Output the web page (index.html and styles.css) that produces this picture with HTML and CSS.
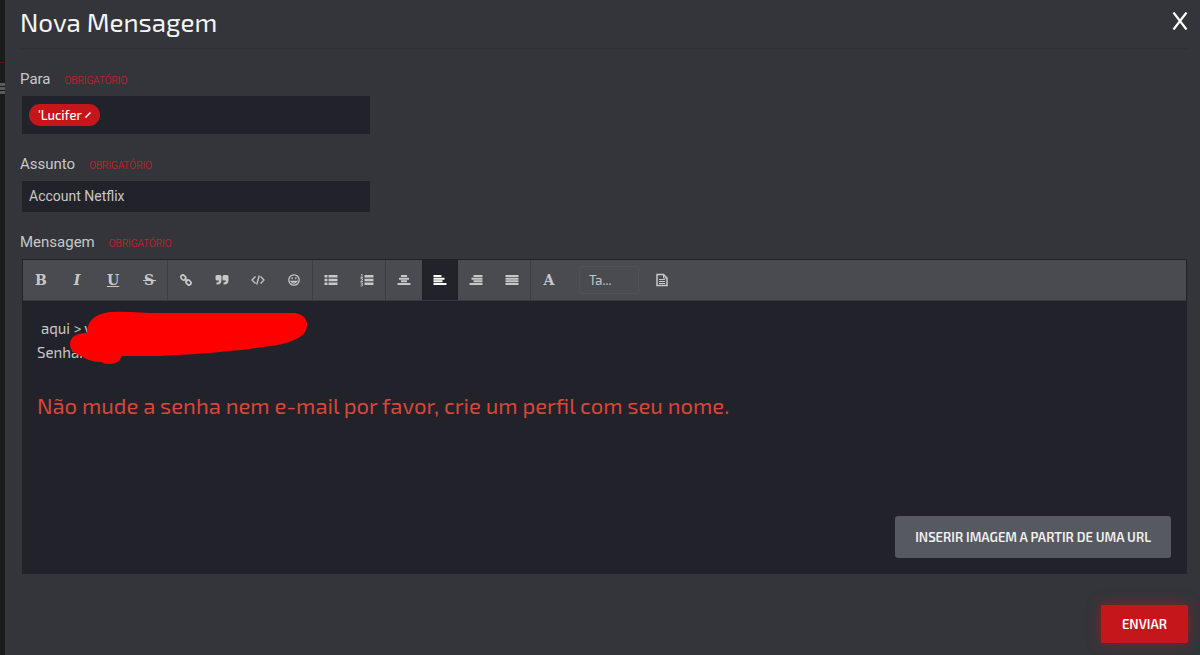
FILE: index.html
```
<!DOCTYPE html>
<html lang="pt-BR">
<head>
    <meta charset="UTF-8">
    <title>Nova Mensagem</title>
    <link rel="stylesheet" href="styles.css">
</head>
<body>
    <!-- strip of the page behind the modal -->
    <div class="behind">
        <div class="behind-line"></div>
        <div class="behind-menu"></div>
    </div>

    <form class="modal">
        <header class="modal-header">
            <h1>Nova Mensagem</h1>
            <button type="button" class="close" aria-label="Fechar">
                <svg width="16" height="18" viewBox="0 0 16 18"><path d="M1.500 0.500L14.500 17.500M14.500 0.500L1.500 17.500" stroke="#fff" stroke-width="2.200"/></svg>
            </button>
        </header>

        <div class="label-row">
            <label for="to">Para</label>
            <span class="required">OBRIGATÓRIO</span>
        </div>
        <div class="field tags">
            <span class="tag">'Lucifer
                <svg width="6" height="6" viewBox="0 0 6 6"><path d="M0.500 5.500L5.500 0.500" stroke="#fff" stroke-width="1.500"/></svg>
            </span>
            <input type="text" id="to">
        </div>

        <div class="label-row">
            <label for="subject">Assunto</label>
            <span class="required">OBRIGATÓRIO</span>
        </div>
        <input type="text" id="subject" class="field subject" value="Account Netflix">

        <div class="label-row">
            <label id="message-label">Mensagem</label>
            <span class="required">OBRIGATÓRIO</span>
        </div>
        <div class="editor">
            <div class="toolbar">
                <div class="group">
                    <button type="button" class="letter" aria-label="Negrito">B</button>
                    <button type="button" class="letter italic" aria-label="Itálico">I</button>
                    <button type="button" class="letter underline" aria-label="Sublinhado">U</button>
                    <button type="button" class="letter strike" aria-label="Tachado">S</button>
                </div>
                <div class="group">
                    <button type="button" aria-label="Link">
                        <svg viewBox="0 0 14 14" fill="none" stroke="currentColor" stroke-width="1.700"><rect x="1.600" y="2.600" width="5.400" height="4" rx="2" transform="rotate(45 4.300 4.600)"/><rect x="6.800" y="7.400" width="5.400" height="4" rx="2" transform="rotate(45 9.500 9.400)"/><path d="M5.500 5.500l3 3"/></svg>
                    </button>
                    <button type="button" aria-label="Citação">
                        <svg viewBox="0 0 14 14" fill="currentColor"><path d="M2 2h3q1.500 0 1.500 1.500V7q0 4.500-4.500 4.500H1.500v-2H2Q4 9.500 4 7.500H2Q.5 7.500 .5 6V3.500Q.5 2 2 2zM9 2h3q1.500 0 1.500 1.500V7q0 4.500-4.500 4.500H8.500v-2H9q2 0 2-2H9Q7.500 7.500 7.500 6V3.500Q7.500 2 9 2z"/></svg>
                    </button>
                    <button type="button" aria-label="Código">
                        <svg viewBox="0 0 14 14" fill="none" stroke="currentColor" stroke-width="1.300"><path d="M4.500 3.500L1 7l3.500 3.500M9.500 3.500L13 7l-3.500 3.500M8.300 2.500L5.700 11.500"/></svg>
                    </button>
                    <button type="button" aria-label="Emoticon">
                        <svg viewBox="0 0 14 14" fill="none" stroke="currentColor" stroke-width="1.300"><circle cx="7" cy="7" r="5.200"/><path d="M4.200 8.300q2.800 3.600 5.600 0zM5.200 4.300v2M8.800 4.300v2"/></svg>
                    </button>
                </div>
                <div class="group">
                    <button type="button" aria-label="Lista">
                        <svg viewBox="0 0 14 14" fill="currentColor"><path d="M.5 2h3v2.500h-3zM.5 5.800h3v2.500h-3zM.5 9.500h3V12h-3zM4.500 2h9v2.500h-9zM4.500 5.800h9v2.500h-9zM4.500 9.500h9V12h-9z"/></svg>
                    </button>
                    <button type="button" aria-label="Lista numerada">
                        <svg viewBox="0 0 14 14" fill="currentColor"><path d="M4.500 2h9v2.500h-9zM4.500 5.800h9v2.500h-9zM4.500 9.500h9V12h-9z"/><path d="M1 1.500h1v3M.5 4.500h2.500M.5 5.800h2v1.200l-1.800 1.500h2.300M.5 10h2.300l-1.200 1.300q1.500 0 1 1.200-.8 1-2.100.2" fill="none" stroke="currentColor" stroke-width=".9"/></svg>
                    </button>
                </div>
                <div class="group">
                    <button type="button" aria-label="Centralizar">
                        <svg viewBox="0 0 14 14" fill="currentColor"><path d="M4 2h6v2H4zM2 4.700h10v2H2zM4 7.300h6v2H4zM.5 10h13v2H.5z"/></svg>
                    </button>
                    <button type="button" class="active" aria-label="Alinhar à esquerda">
                        <svg viewBox="0 0 14 14" fill="currentColor"><path d="M.5 2h8v2h-8zM.5 4.700h11v2H.5zM.5 7.300h9v2h-9zM.5 10h13v2H.5z"/></svg>
                    </button>
                    <button type="button" aria-label="Alinhar à direita">
                        <svg viewBox="0 0 14 14" fill="currentColor"><path d="M4.500 2h9v2h-9zM2.500 4.700h11v2h-11zM4.500 7.300h9v2h-9zM.5 10h13v2H.5z"/></svg>
                    </button>
                    <button type="button" aria-label="Justificar">
                        <svg viewBox="0 0 14 14" fill="currentColor"><path d="M.5 2h13v2H.5zM.5 4.700h13v2H.5zM.5 7.300h13v2H.5zM.5 10h13v2H.5z"/></svg>
                    </button>
                </div>
                <div class="group last">
                    <button type="button" class="letter" aria-label="Cor do texto">A</button>
                    <select class="size" aria-label="Tamanho">
                        <option>Ta...</option>
                    </select>
                    <button type="button" aria-label="Modelos">
                        <svg viewBox="0 0 14 14" fill="none" stroke="currentColor"><path d="M2 1.500H8.500L12 5V12.500H2z" stroke-width="1.500"/><path d="M8.500 1.500V5H12M4 6.500h6M4 8.500h6M4 10.500h6" stroke-width="1"/></svg>
                    </button>
                </div>
            </div>

            <div class="message" contenteditable="true" spellcheck="false" role="textbox" aria-labelledby="message-label">
                <p class="first">aqui &gt; v</p>
                <p>Senha:</p>
                <p class="warning">Não mude a senha nem e-mail por favor, crie um perfil com seu nome.</p>
            </div>
            <svg class="scribble" width="238" height="54" viewBox="0 0 238 54"><path d="M40 1Q50 0 80 2H225Q237 4 237 14Q237 24 224 29Q212 34 201 35L172 39L159 40Q130 43 105 44L89 45H52Q49 53 39 53Q34 53 31 51Q20 51 11 45Q0 41 0 34Q0 22 17 22Q17 4 40 1Z" fill="#f00"/></svg>

            <div class="editor-footer">
                <button type="button" class="insert">INSERIR IMAGEM A PARTIR DE UMA URL</button>
            </div>
        </div>

        <div class="actions">
            <button type="submit" class="send">ENVIAR</button>
        </div>
    </form>
</body>
</html>
```
FILE: styles.css
```
* {
    box-sizing: border-box;
}
body {
    margin: 0;
    min-height: 100vh;
    display: flex;
    background-color: #33353b;
    color: #c8c8c9;
    font-family: "Exo 2", "Open Sans", sans-serif;
}
h1, p {
    margin: 0;
    font-weight: normal;
}
button, input, select {
    margin: 0;
    padding: 0;
    border: 0;
    background: none;
    color: inherit;
    font-family: inherit;
}

/* page behind */
.behind {
    width: 5px;
    flex-shrink: 0;
    padding-top: 62px;
    background-color: #1b1b1c;
}
.behind-line {
    height: 1px;
    background-color: #5c1014;
}
.behind-menu {
    height: 11px;
    margin-top: 20px;
    background: repeating-linear-gradient(#5a5a5b 0 3px, #1b1b1c 3px 4px);
}

.modal {
    flex: 1;
    min-width: 0;
    padding: 0 12px 12px 15px;
}
.modal-header {
    display: flex;
    justify-content: space-between;
    align-items: center;
    height: 49px;
    padding-bottom: 6px;
    border-bottom: 1px solid #2e3035;
}
.modal-header h1 {
    color: #f4f4f4;
    font-size: 26px;
}
.close {
    display: flex;
}

/* labels and fields */
.label-row {
    display: flex;
    align-items: center;
    gap: 14px;
    height: 20px;
    margin: 20px 0 7px;
    font-family: Roboto, sans-serif;
    font-size: 15px;
}
.required {
    padding-top: 2px;
    color: #e01c22;
    font-size: 10px;
    font-weight: 300;
}
.field {
    display: flex;
    width: 348px;
    max-width: 100%;
    margin-left: 2px;
    background-color: #22222b;
}
.tags {
    align-items: center;
    height: 38px;
    padding: 0 7px;
}
.tags input {
    flex: 1;
    min-width: 0;
}
.tag {
    display: flex;
    align-items: center;
    gap: 3px;
    height: 22px;
    padding: 0 9px;
    border-radius: 11px;
    background-color: #c5161c;
    color: #fff;
    font-size: 13px;
    font-weight: 500;
}
.subject {
    height: 31px;
    padding: 0 7px 2px;
    font-family: Roboto, sans-serif;
    font-size: 14px;
}

/* editor */
.editor {
    position: relative;
    display: flex;
    flex-direction: column;
    min-height: 315px;
    margin: 0 1px 0 2px;
    border: 1px solid #22222b;
    background-color: #22222b;
}
.toolbar {
    display: flex;
    flex-wrap: wrap;
    border-bottom: 1px solid #363743;
    background-color: #494b51;
}
.group {
    display: flex;
    align-items: center;
    border-right: 1px solid #3b3d43;
}
.group.last {
    border-right: 0;
}
.group button {
    display: flex;
    justify-content: center;
    align-items: center;
    width: 36px;
    height: 40px;
}
.group svg {
    width: 14px;
    height: 14px;
}
.group .active {
    background-color: #22222b;
    color: #fff;
}
.group .letter {
    font-family: "DejaVu Serif", serif;
    font-size: 14px;
    font-weight: bold;
}
.group .italic {
    font-style: italic;
}
.group .underline {
    text-decoration: underline;
}
.group .strike {
    background: linear-gradient(#c8c8c9, #c8c8c9) center / 13px 1px no-repeat;
}
.size {
    appearance: none;
    width: 60px;
    height: 28px;
    margin: 0 5px 0 12px;
    padding: 0 9px;
    border: 1px solid #50525a;
    border-radius: 3px;
    font-size: 13px;
}
.message {
    flex: 1;
    padding: 15px 14px 0;
    font-size: 15px;
    line-height: 24px;
    outline: 0;
}
.message .first {
    padding-left: 4px;
}
.message .warning {
    margin-top: 24px;
    color: #d9463a;
    font-size: 22px;
    line-height: 34px;
}
/* drawn over the message text */
.scribble {
    position: absolute;
    left: 47px;
    top: 51px;
}
.editor-footer {
    display: flex;
    justify-content: flex-end;
    padding: 15px;
}
.insert {
    height: 42px;
    padding: 0 20px;
    border-radius: 3px;
    background-color: #575960;
    color: #f0f0f0;
    font-size: 13px;
    font-weight: 600;
}
.actions {
    display: flex;
    justify-content: flex-end;
    margin-top: 31px;
}
.send {
    height: 38px;
    padding: 0 21px;
    border-radius: 2px;
    background-color: #c5161c;
    box-shadow: 0 0 14px rgba(197, 22, 28, 0.5);
    color: #fff;
    font-size: 13px;
    font-weight: 600;
}
```
